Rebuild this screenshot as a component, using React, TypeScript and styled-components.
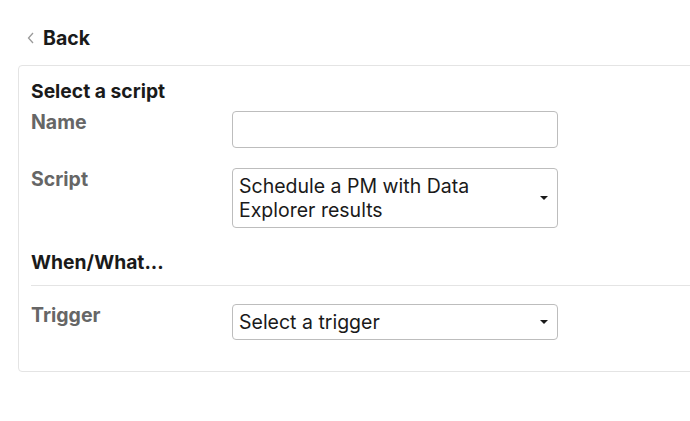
import React, { ReactElement } from 'react';
import styled, { createGlobalStyle } from 'styled-components';

const GlobalStyle = createGlobalStyle`
  html, body {
    margin: 0;
    padding: 0;
    background: #ffffff;
    font-family: Inter, "Liberation Sans", sans-serif;
    color: #1a1a1a;
    overflow: hidden;
  }
`;

type FieldRowProps = {
  label: string,
  children: React.ReactNode,
};

function FieldRow({ label, children }: FieldRowProps): ReactElement {
  return (
    <StyledRow>
      <Label>{label}</Label>
      <Control>{children}</Control>
    </StyledRow>
  );
}

function Caret(): ReactElement {
  return (
    <svg width="8" height="4" viewBox="0 0 8 4" className="caret">
      <path d="M0 0 H8 L4 4 Z" fill="#1a1a1a" />
    </svg>
  );
}

function App(): ReactElement {
  return (
    <Page>
      <GlobalStyle />
      <BackLink>
        <svg width="8" height="12" viewBox="0 0 8 12">
          <path d="M6 1 L1.5 6 L6 11" fill="none" stroke="#9a9a9a" strokeWidth="1.3" />
        </svg>
        <span>Back</span>
      </BackLink>
      <Card>
        <SectionTitle>Select a script</SectionTitle>
        <FieldRow label='Name'>
          <TextInput />
        </FieldRow>
        <FieldRow label='Script'>
          <SelectBox>
            <div className='value'>Schedule a PM with Data Explorer results</div>
            <Caret />
          </SelectBox>
        </FieldRow>
        <SectionTitle className='spaced'>When/What...</SectionTitle>
        <Divider />
        <FieldRow label='Trigger'>
          <SelectBox>
            <div className='value'>Select a trigger</div>
            <Caret />
          </SelectBox>
        </FieldRow>
      </Card>
    </Page>
  );
}

export default App;

const Page = styled.div`
  width: 690px;
  height: 421px;
  padding-top: 26px;
  box-sizing: border-box;
`;

const BackLink = styled.div`
  display: flex;
  align-items: center;
  gap: 8px;
  padding-left: 27px;
  height: 24px;
  font-size: 19.5px;
  font-weight: 700;
  color: #1a1a1a;
  margin-bottom: 15px;
`;

const Card = styled.div`
  margin-left: 18px;
  width: 700px;
  border: 1px solid #e4e4e4;
  border-radius: 4px;
  padding: 13px 12px 31px;
  box-sizing: border-box;
`;

const SectionTitle = styled.div`
  font-size: 19.3px;
  font-weight: 700;
  line-height: 24px;
  color: #1a1a1a;
  margin-bottom: 7px;

  &.spaced {
    margin-top: 22px;
    margin-bottom: 11px;
  }
`;

const Divider = styled.div`
  height: 1px;
  background-color: #e4e4e4;
  margin-bottom: 17px;
`;

const StyledRow = styled.div`
  display: flex;
  align-items: flex-start;
  margin-bottom: 19px;

  &:last-child {
    margin-bottom: 0;
  }
`;

const Label = styled.div`
  width: 201px;
  flex-shrink: 0;
  font-size: 19.5px;
  font-weight: 700;
  line-height: 24px;
  color: #666666;
`;

const Control = styled.div`
  width: 326px;
  margin-top: 1px;
`;

const TextInput = styled.input`
  display: block;
  width: 100%;
  height: 37px;
  box-sizing: border-box;
  border: 1px solid #bdbdbd;
  border-radius: 4px;
  outline: none;
  background: #ffffff;
`;

const SelectBox = styled.div`
  display: flex;
  align-items: center;
  box-sizing: border-box;
  min-height: 36px;
  border: 1px solid #bdbdbd;
  border-radius: 4px;
  padding: 5px 9px 5px 6px;
  font-size: 19.5px;
  line-height: 24px;
  color: #1a1a1a;

  .value {
    flex: 1;
  }

  .caret {
    flex-shrink: 0;
    margin-left: 10px;
  }
`;
